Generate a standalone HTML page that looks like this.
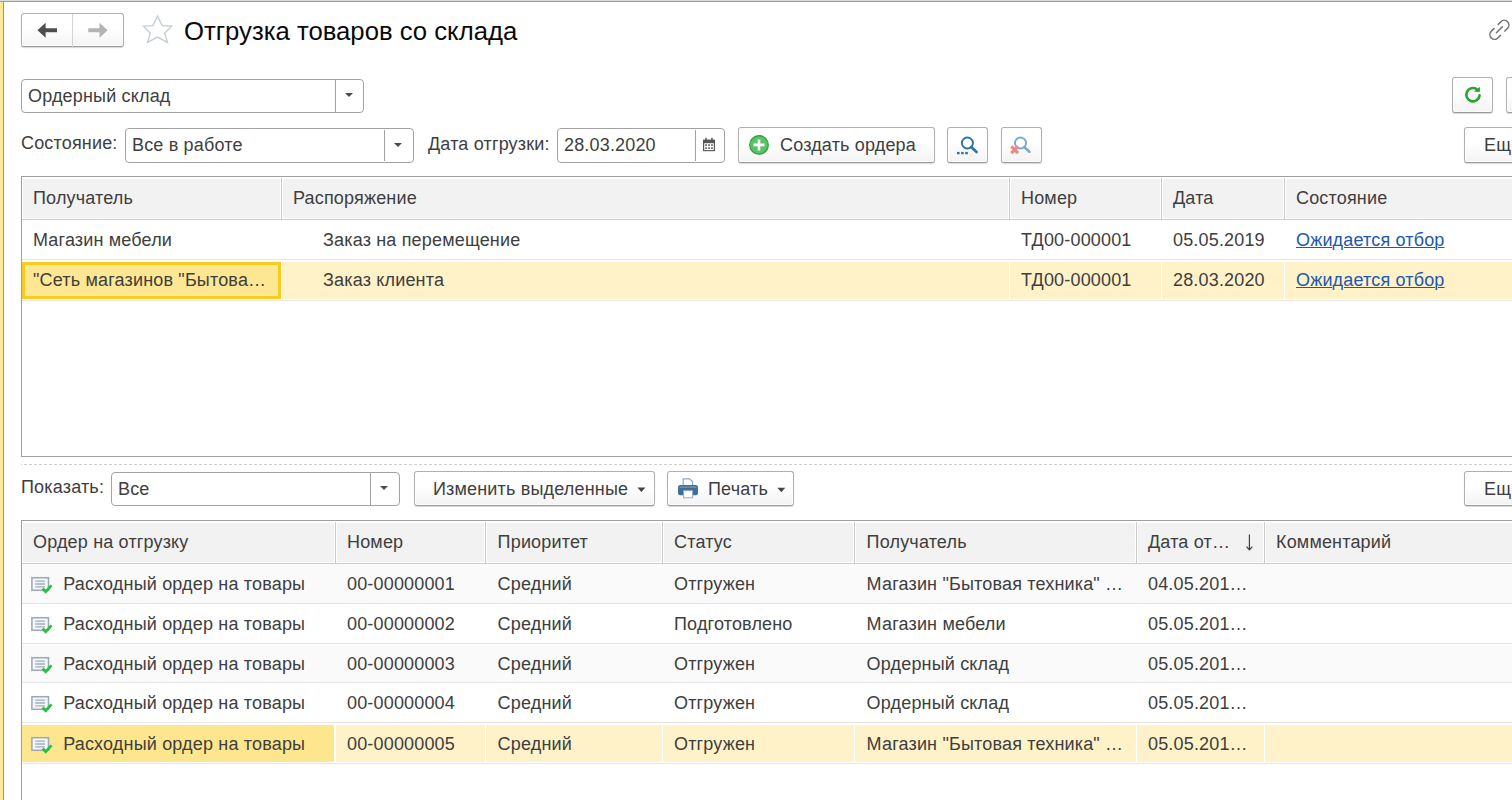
<!DOCTYPE html>
<html lang="ru">
<head>
<meta charset="utf-8">
<title>Отгрузка товаров со склада</title>
<style>
*{box-sizing:border-box;margin:0;padding:0}
html,body{width:1512px;height:800px;overflow:hidden;background:#fff}
body{position:relative;font-family:"Liberation Sans",sans-serif;font-size:18px;color:#3e3e3e;letter-spacing:.17px}
.abs{position:absolute}
.t{position:absolute;white-space:nowrap;line-height:20px;height:20px}
.btn{position:absolute;border:1px solid #b0b0b0;border-radius:3px;background:linear-gradient(#fff 42%,#f3f3f3 100%);border-bottom-color:#9b9b9b;box-shadow:inset 0 0 0 1px #fff,0 1px 1px rgba(0,0,0,.16)}
.inp{position:absolute;border:1px solid #a3a3a3;border-radius:4px;background:#fff}
.vsep{position:absolute;width:1px;background:#a3a3a3}
.tri{position:absolute;width:0;height:0;border-left:4px solid transparent;border-right:4px solid transparent;border-top:4.5px solid #4a4a4a}
a.lnk{color:#2058b1;text-decoration:underline;text-underline-offset:1px;text-decoration-thickness:1px}
</style>
</head>
<body>
<!-- window chrome -->
<div class="abs" style="left:0;top:0;width:1512px;height:1px;background:#dcdcdc"></div>
<div class="abs" style="left:0;top:1px;width:1512px;height:1px;background:#9b9b9b"></div>
<div class="abs" style="left:0;top:2px;width:3px;height:798px;background:#fdeb9b"></div>
<div class="abs" style="left:3px;top:2px;width:1px;height:798px;background:#a39659"></div>

<!-- HEADER -->
<div id="hdr">
<div class="btn" style="left:21px;top:13px;width:103px;height:34px"></div>
<div class="abs" style="left:72px;top:14px;width:1px;height:34px;background:#d4d4d4"></div>
<svg class="abs" style="left:36px;top:21px" width="24" height="18" viewBox="0 0 24 18"><path d="M1.5 9.3 L9.6 1.8 L9.6 7.2 L21 7.2 L21 11.3 L9.6 11.3 L9.6 16.8 Z" fill="#4d4d4d"/></svg>
<svg class="abs" style="left:86px;top:21px" width="24" height="18" viewBox="0 0 24 18"><path d="M21.6 9.3 L13.5 1.8 L13.5 7.2 L2.3 7.2 L2.3 11.3 L13.5 11.3 L13.5 16.8 Z" fill="#b3b3b3"/></svg>
<svg class="abs" style="left:140px;top:13px" width="36" height="34" viewBox="0 0 36 34"><path d="M17.5 3.1 L22.1 12.6 L31.6 13.1 L24.7 20.2 L27.5 29.4 L17.5 24.1 L7.5 29.4 L10.3 20.2 L3.4 13.1 L12.9 12.6 Z" fill="none" stroke="#c5ccd3" stroke-width="1.35" stroke-linejoin="miter"/></svg>
<div class="t" id="title" style="left:184px;top:16px;font-size:25.7px;letter-spacing:0;line-height:30px;height:30px;color:#0a0a0a">Отгрузка товаров со склада</div>
<svg class="abs" style="left:1485px;top:15px" width="27" height="30" viewBox="0 0 27 30"><g transform="translate(14.4,14.8) rotate(-45)" fill="none" stroke="#707070" stroke-width="1.5" stroke-linecap="round"><path d="M3 -4.7 L6.8 -4.7 A4.7 4.7 0 0 1 6.8 4.7 L3 4.7"/><path d="M-3 -4.7 L-6.8 -4.7 A4.7 4.7 0 0 0 -6.8 4.7 L-3 4.7"/><path d="M-4.2 0 L4.2 0"/></g></svg>
</div>
<!-- FILTERS -->
<div id="flt">
<div class="inp" style="left:21px;top:79px;width:343px;height:34px"></div>
<div class="vsep" style="left:335px;top:80px;height:32px"></div>
<div class="tri" style="left:345px;top:93.4px"></div>
<div class="t" id="f1" style="left:28px;top:86px">Ордерный склад</div>

<div class="btn" style="left:1452px;top:77px;width:41px;height:36px"></div>
<svg class="abs" style="left:1462px;top:84px" width="22" height="22" viewBox="0 0 22 22"><path d="M17.62 11.28 A6.65 6.65 0 1 1 14.81 5.25" fill="none" stroke="#2ba62d" stroke-width="2.6" stroke-linecap="round"/><path d="M17.9 2.8 L17.9 8 L11.9 7.8 Z" fill="#2ba62d"/></svg>
<div class="btn" style="left:1506px;top:77px;width:41px;height:36px"></div>

<div class="t" id="l1" style="left:21px;top:133px">Состояние:</div>
<div class="inp" style="left:125px;top:128px;width:289px;height:35px"></div>
<div class="vsep" style="left:384px;top:130px;height:31px"></div>
<div class="tri" style="left:394.3px;top:143.4px"></div>
<div class="t" id="f2" style="left:132px;top:134.5px">Все в работе</div>

<div class="t" id="l2" style="left:428px;top:134.4px">Дата отгрузки:</div>
<div class="inp" style="left:557px;top:128px;width:168px;height:35px"></div>
<div class="vsep" style="left:695px;top:130px;height:31px"></div>
<div class="t" id="f3" style="left:564px;top:134.5px">28.03.2020</div>
<svg class="abs" style="left:702px;top:137px" width="14" height="15" viewBox="0 0 14 15"><path d="M1 2.6 H13 V14.2 H1 Z" fill="#555"/><rect x="2.2" y="6.2" width="9.6" height="6.9" fill="#fff"/><rect x="3.3" y="0.8" width="1.5" height="2.6" fill="#555"/><rect x="9.2" y="0.8" width="1.5" height="2.6" fill="#555"/><g fill="#777"><rect x="3.1" y="7.2" width="1.9" height="1.8"/><rect x="6.05" y="7.2" width="1.9" height="1.8"/><rect x="9" y="7.2" width="1.9" height="1.8"/><rect x="3.1" y="10.2" width="1.9" height="1.8"/><rect x="6.05" y="10.2" width="1.9" height="1.8"/><rect x="9" y="10.2" width="1.9" height="1.8"/></g></svg>

<div class="btn" style="left:738px;top:127px;width:197px;height:36px"></div>
<svg class="abs" style="left:748px;top:134px" width="22" height="22" viewBox="0 0 22 22"><circle cx="11" cy="10.9" r="9.3" fill="#5cc267" stroke="#2f9d3f" stroke-width="1.2"/><path d="M11 5.4 V16.4 M5.5 10.9 H16.5" stroke="#fff" stroke-width="2.6"/></svg>
<div class="t" id="b1" style="left:780px;top:134.5px">Создать ордера</div>

<div class="btn" style="left:947px;top:127px;width:41px;height:36px"></div>
<svg class="abs" style="left:955px;top:134px" width="26" height="24" viewBox="0 0 26 24"><circle cx="12.4" cy="9" r="5.55" fill="none" stroke="#2f72a3" stroke-width="1.9"/><path d="M16.2 13 L21.6 18" stroke="#2f72a3" stroke-width="2.6" stroke-linecap="round"/><g fill="#2f72a3"><rect x="2" y="17.9" width="2.6" height="2.4"/><rect x="6.1" y="17.9" width="2.6" height="2.4"/><rect x="10.2" y="17.9" width="2.6" height="2.4"/></g></svg>

<div class="btn" style="left:1001px;top:127px;width:41px;height:36px"></div>
<svg class="abs" style="left:1008px;top:134px" width="26" height="24" viewBox="0 0 26 24"><circle cx="12.5" cy="9" r="5.55" fill="none" stroke="#7fa9c8" stroke-width="1.9"/><path d="M16.3 13 L21.4 17.8" stroke="#7fa9c8" stroke-width="2.6" stroke-linecap="round"/><path d="M3.3 12.3 L10.1 19.1 M10.1 12.3 L3.3 19.1" stroke="#ef868b" stroke-width="3.2"/></svg>

<div class="btn" style="left:1464px;top:127px;width:80px;height:36px"></div>
<div class="t" id="b2" style="left:1484px;top:134.5px">Ещё</div>
</div>
<!-- TABLE1 -->
<div id="t1">
<div class="abs" style="left:21px;top:176px;width:1500px;height:281px;border:1px solid #a0a0a0;background:#fff"></div>
<div class="abs" style="left:22px;top:177px;width:1490px;height:42px;background:#fff"></div>
<div class="abs" style="left:22px;top:219px;width:1490px;height:1px;background:#ccc"></div>
<div class="abs" style="left:23px;top:179px;width:257px;height:39px;background:#f2f2f2"></div>
<div class="t" style="left:33px;top:187.5px">Получатель</div>
<div class="abs" style="left:283px;top:179px;width:725px;height:39px;background:#f2f2f2"></div>
<div class="abs" style="left:281px;top:178px;width:1px;height:41px;background:#ccc"></div>
<div class="t" style="left:293px;top:187.5px">Распоряжение</div>
<div class="abs" style="left:1011px;top:179px;width:149px;height:39px;background:#f2f2f2"></div>
<div class="abs" style="left:1009px;top:178px;width:1px;height:41px;background:#ccc"></div>
<div class="t" style="left:1021px;top:187.5px">Номер</div>
<div class="abs" style="left:1163px;top:179px;width:120px;height:39px;background:#f2f2f2"></div>
<div class="abs" style="left:1161px;top:178px;width:1px;height:41px;background:#ccc"></div>
<div class="t" style="left:1173px;top:187.5px">Дата</div>
<div class="abs" style="left:1286px;top:179px;width:230px;height:39px;background:#f2f2f2"></div>
<div class="abs" style="left:1284px;top:178px;width:1px;height:41px;background:#ccc"></div>
<div class="t" style="left:1296px;top:187.5px">Состояние</div>
<div class="abs" style="left:22px;top:259px;width:1490px;height:1px;background:#e6e6e6"></div>
<div class="abs" style="left:22px;top:300px;width:1490px;height:1px;background:#e6e6e6"></div>
<div class="abs" style="left:282px;top:262px;width:727px;height:37px;background:#fff2c8"></div>
<div class="abs" style="left:1010px;top:262px;width:151px;height:37px;background:#fff2c8"></div>
<div class="abs" style="left:1162px;top:262px;width:122px;height:37px;background:#fff2c8"></div>
<div class="abs" style="left:1285px;top:262px;width:235px;height:37px;background:#fff2c8"></div>
<div class="abs" style="left:22px;top:262px;width:259px;height:37px;background:#fde792;border:3px solid #f9cb1f"></div>
<div class="t" style="left:33px;top:229.5px">Магазин мебели</div>
<div class="t" style="left:323px;top:229.5px">Заказ на перемещение</div>
<div class="t" style="left:1021px;top:229.5px">ТД00-000001</div>
<div class="t" style="left:1173px;top:229.5px">05.05.2019</div>
<div class="t" style="left:1296px;top:229.5px"><a class="lnk">Ожидается отбор</a></div>
<div class="t" style="left:33px;top:270.4px">"Сеть магазинов "Бытова…</div>
<div class="t" style="left:323px;top:270.4px">Заказ клиента</div>
<div class="t" style="left:1021px;top:270.4px">ТД00-000001</div>
<div class="t" style="left:1173px;top:270.4px">28.03.2020</div>
<div class="t" style="left:1296px;top:270.4px"><a class="lnk">Ожидается отбор</a></div>
</div>
<!-- MID -->
<div id="mid">
<div class="abs" style="left:21px;top:464px;width:1491px;height:1px;background:linear-gradient(90deg,#cfcfcf 0 3px,transparent 3px 5px) -2px 0/5px 1px repeat-x"></div>
<div class="t" style="left:21px;top:477px">Показать:</div>
<div class="inp" style="left:111px;top:472px;width:289px;height:34px"></div>
<div class="vsep" style="left:370px;top:473px;height:32px"></div>
<div class="tri" style="left:380px;top:486px"></div>
<div class="t" style="left:118px;top:479px">Все</div>
<div class="btn" style="left:414px;top:471px;width:241px;height:35px"></div>
<div class="t" style="left:433px;top:478.5px">Изменить выделенные</div>
<svg class="abs" style="left:636px;top:486px" width="12" height="8" viewBox="0 0 12 8"><path d="M1.4 1.6 H9.4 L5.4 6 Z" fill="#454545"/></svg>
<div class="btn" style="left:667px;top:471px;width:127px;height:35px"></div>
<svg class="abs" style="left:676px;top:476px" width="24" height="24" viewBox="0 0 24 24"><path d="M7.2 9.4 V2.8 H13.6 L16.6 5.8 V9.4" fill="#fff" stroke="#8fa9be" stroke-width="1.2"/><rect x="2" y="9" width="20" height="10.2" rx="2.2" fill="#3f6f99"/><rect x="3.6" y="10.4" width="16.8" height="1.4" fill="#6f97b8"/><rect x="7.6" y="14.6" width="9" height="7.2" fill="#fff" stroke="#8fa9be" stroke-width="1"/></svg>
<div class="t" style="left:708px;top:478.5px">Печать</div>
<svg class="abs" style="left:776px;top:486px" width="12" height="8" viewBox="0 0 12 8"><path d="M1.3 1.8 H9.3 L5.3 6.2 Z" fill="#454545"/></svg>
<div class="btn" style="left:1464px;top:471px;width:80px;height:35px"></div>
<div class="t" style="left:1484px;top:478.5px">Ещё</div>
</div>
<!-- TABLE2 -->
<div id="t2">
<div class="abs" style="left:21px;top:520px;width:1500px;height:300px;border:1px solid #a0a0a0;background:#fff"></div>
<div class="abs" style="left:22px;top:521px;width:1490px;height:42px;background:#fff"></div>
<div class="abs" style="left:22px;top:563px;width:1490px;height:1px;background:#ccc"></div>
<div class="abs" style="left:23px;top:523px;width:311px;height:39px;background:#f2f2f2"></div>
<div class="t" style="left:33px;top:531.5px">Ордер на отгрузку</div>
<div class="abs" style="left:337px;top:523px;width:147px;height:39px;background:#f2f2f2"></div>
<div class="abs" style="left:335px;top:522px;width:1px;height:41px;background:#ccc"></div>
<div class="t" style="left:347px;top:531.5px">Номер</div>
<div class="abs" style="left:487px;top:523px;width:174px;height:39px;background:#f2f2f2"></div>
<div class="abs" style="left:485px;top:522px;width:1px;height:41px;background:#ccc"></div>
<div class="t" style="left:497.6px;top:531.5px">Приоритет</div>
<div class="abs" style="left:664px;top:523px;width:189px;height:39px;background:#f2f2f2"></div>
<div class="abs" style="left:662px;top:522px;width:1px;height:41px;background:#ccc"></div>
<div class="t" style="left:674px;top:531.5px">Статус</div>
<div class="abs" style="left:856px;top:523px;width:279px;height:39px;background:#f2f2f2"></div>
<div class="abs" style="left:854px;top:522px;width:1px;height:41px;background:#ccc"></div>
<div class="t" style="left:866.6px;top:531.5px">Получатель</div>
<div class="abs" style="left:1138px;top:523px;width:125px;height:39px;background:#f2f2f2"></div>
<div class="abs" style="left:1136px;top:522px;width:1px;height:41px;background:#ccc"></div>
<div class="t" style="left:1148px;top:531.5px">Дата от…</div>
<div class="abs" style="left:1266px;top:523px;width:250px;height:39px;background:#f2f2f2"></div>
<div class="abs" style="left:1264px;top:522px;width:1px;height:41px;background:#ccc"></div>
<div class="t" style="left:1276px;top:531.5px">Комментарий</div>
<svg class="abs" style="left:1243px;top:532px" width="14" height="20" viewBox="0 0 14 20"><path d="M6.4 2.4 V17.8 M3.5 14.6 L6.4 17.9 L9.3 14.6" fill="none" stroke="#3a3a4a" stroke-width="1.15"/></svg>
<div class="abs" style="left:22px;top:564px;width:1490px;height:39px;background:#fafafa"></div>
<div class="abs" style="left:22px;top:644px;width:1490px;height:39px;background:#fafafa"></div>
<div class="abs" style="left:22px;top:603px;width:1490px;height:1px;background:#e6e6e6"></div>
<div class="abs" style="left:22px;top:643px;width:1490px;height:1px;background:#e6e6e6"></div>
<div class="abs" style="left:22px;top:682px;width:1490px;height:1px;background:#e6e6e6"></div>
<div class="abs" style="left:22px;top:722px;width:1490px;height:1px;background:#e6e6e6"></div>
<div class="abs" style="left:22px;top:763px;width:1490px;height:1px;background:#e6e6e6"></div>
<div class="abs" style="left:336px;top:725px;width:149px;height:37px;background:#fff2c8"></div>
<div class="abs" style="left:486px;top:725px;width:176px;height:37px;background:#fff2c8"></div>
<div class="abs" style="left:663px;top:725px;width:191px;height:37px;background:#fff2c8"></div>
<div class="abs" style="left:855px;top:725px;width:281px;height:37px;background:#fff2c8"></div>
<div class="abs" style="left:1137px;top:725px;width:127px;height:37px;background:#fff2c8"></div>
<div class="abs" style="left:1265px;top:725px;width:255px;height:37px;background:#fff2c8"></div>
<div class="abs" style="left:22px;top:725px;width:312px;height:37px;background:#fde68e"></div>
<svg class="abs" style="left:30.25px;top:576.2px" width="24" height="20" viewBox="0 0 24 20"><rect x="1.9" y="1.7" width="16.6" height="12.6" fill="#f3f5f7" stroke="#9aa8ba" stroke-width="1.5"/><path d="M5.3 5.2 H15 M5.3 8 H15 M5.3 10.8 H15" stroke="#a3afbf" stroke-width="1.3"/><path d="M12.6 12.5 L15.7 15.7 L21.5 9.4" fill="none" stroke="#27c03d" stroke-width="2.7"/></svg>
<div class="t" style="left:63.2px;top:573.5px">Расходный ордер на товары</div>
<div class="t" style="left:347px;top:573.5px">00-00000001</div>
<div class="t" style="left:497.6px;top:573.5px">Средний</div>
<div class="t" style="left:674px;top:573.5px">Отгружен</div>
<div class="t" style="left:866.6px;top:573.5px">Магазин "Бытовая техника" …</div>
<div class="t" style="left:1148px;top:573.5px">04.05.201…</div>
<svg class="abs" style="left:30.25px;top:616.2px" width="24" height="20" viewBox="0 0 24 20"><rect x="1.9" y="1.7" width="16.6" height="12.6" fill="#f3f5f7" stroke="#9aa8ba" stroke-width="1.5"/><path d="M5.3 5.2 H15 M5.3 8 H15 M5.3 10.8 H15" stroke="#a3afbf" stroke-width="1.3"/><path d="M12.6 12.5 L15.7 15.7 L21.5 9.4" fill="none" stroke="#27c03d" stroke-width="2.7"/></svg>
<div class="t" style="left:63.2px;top:613.5px">Расходный ордер на товары</div>
<div class="t" style="left:347px;top:613.5px">00-00000002</div>
<div class="t" style="left:497.6px;top:613.5px">Средний</div>
<div class="t" style="left:674px;top:613.5px">Подготовлено</div>
<div class="t" style="left:866.6px;top:613.5px">Магазин мебели</div>
<div class="t" style="left:1148px;top:613.5px">05.05.201…</div>
<svg class="abs" style="left:30.25px;top:656.2px" width="24" height="20" viewBox="0 0 24 20"><rect x="1.9" y="1.7" width="16.6" height="12.6" fill="#f3f5f7" stroke="#9aa8ba" stroke-width="1.5"/><path d="M5.3 5.2 H15 M5.3 8 H15 M5.3 10.8 H15" stroke="#a3afbf" stroke-width="1.3"/><path d="M12.6 12.5 L15.7 15.7 L21.5 9.4" fill="none" stroke="#27c03d" stroke-width="2.7"/></svg>
<div class="t" style="left:63.2px;top:653.5px">Расходный ордер на товары</div>
<div class="t" style="left:347px;top:653.5px">00-00000003</div>
<div class="t" style="left:497.6px;top:653.5px">Средний</div>
<div class="t" style="left:674px;top:653.5px">Отгружен</div>
<div class="t" style="left:866.6px;top:653.5px">Ордерный склад</div>
<div class="t" style="left:1148px;top:653.5px">05.05.201…</div>
<svg class="abs" style="left:30.25px;top:695.2px" width="24" height="20" viewBox="0 0 24 20"><rect x="1.9" y="1.7" width="16.6" height="12.6" fill="#f3f5f7" stroke="#9aa8ba" stroke-width="1.5"/><path d="M5.3 5.2 H15 M5.3 8 H15 M5.3 10.8 H15" stroke="#a3afbf" stroke-width="1.3"/><path d="M12.6 12.5 L15.7 15.7 L21.5 9.4" fill="none" stroke="#27c03d" stroke-width="2.7"/></svg>
<div class="t" style="left:63.2px;top:693.2px">Расходный ордер на товары</div>
<div class="t" style="left:347px;top:693.2px">00-00000004</div>
<div class="t" style="left:497.6px;top:693.2px">Средний</div>
<div class="t" style="left:674px;top:693.2px">Отгружен</div>
<div class="t" style="left:866.6px;top:693.2px">Ордерный склад</div>
<div class="t" style="left:1148px;top:693.2px">05.05.201…</div>
<svg class="abs" style="left:30.25px;top:736.2px" width="24" height="20" viewBox="0 0 24 20"><rect x="1.9" y="1.7" width="16.6" height="12.6" fill="#f3f5f7" stroke="#9aa8ba" stroke-width="1.5"/><path d="M5.3 5.2 H15 M5.3 8 H15 M5.3 10.8 H15" stroke="#a3afbf" stroke-width="1.3"/><path d="M12.6 12.5 L15.7 15.7 L21.5 9.4" fill="none" stroke="#27c03d" stroke-width="2.7"/></svg>
<div class="t" style="left:63.2px;top:733.5px">Расходный ордер на товары</div>
<div class="t" style="left:347px;top:733.5px">00-00000005</div>
<div class="t" style="left:497.6px;top:733.5px">Средний</div>
<div class="t" style="left:674px;top:733.5px">Отгружен</div>
<div class="t" style="left:866.6px;top:733.5px">Магазин "Бытовая техника" …</div>
<div class="t" style="left:1148px;top:733.5px">05.05.201…</div>
</div>
</body>
</html>
